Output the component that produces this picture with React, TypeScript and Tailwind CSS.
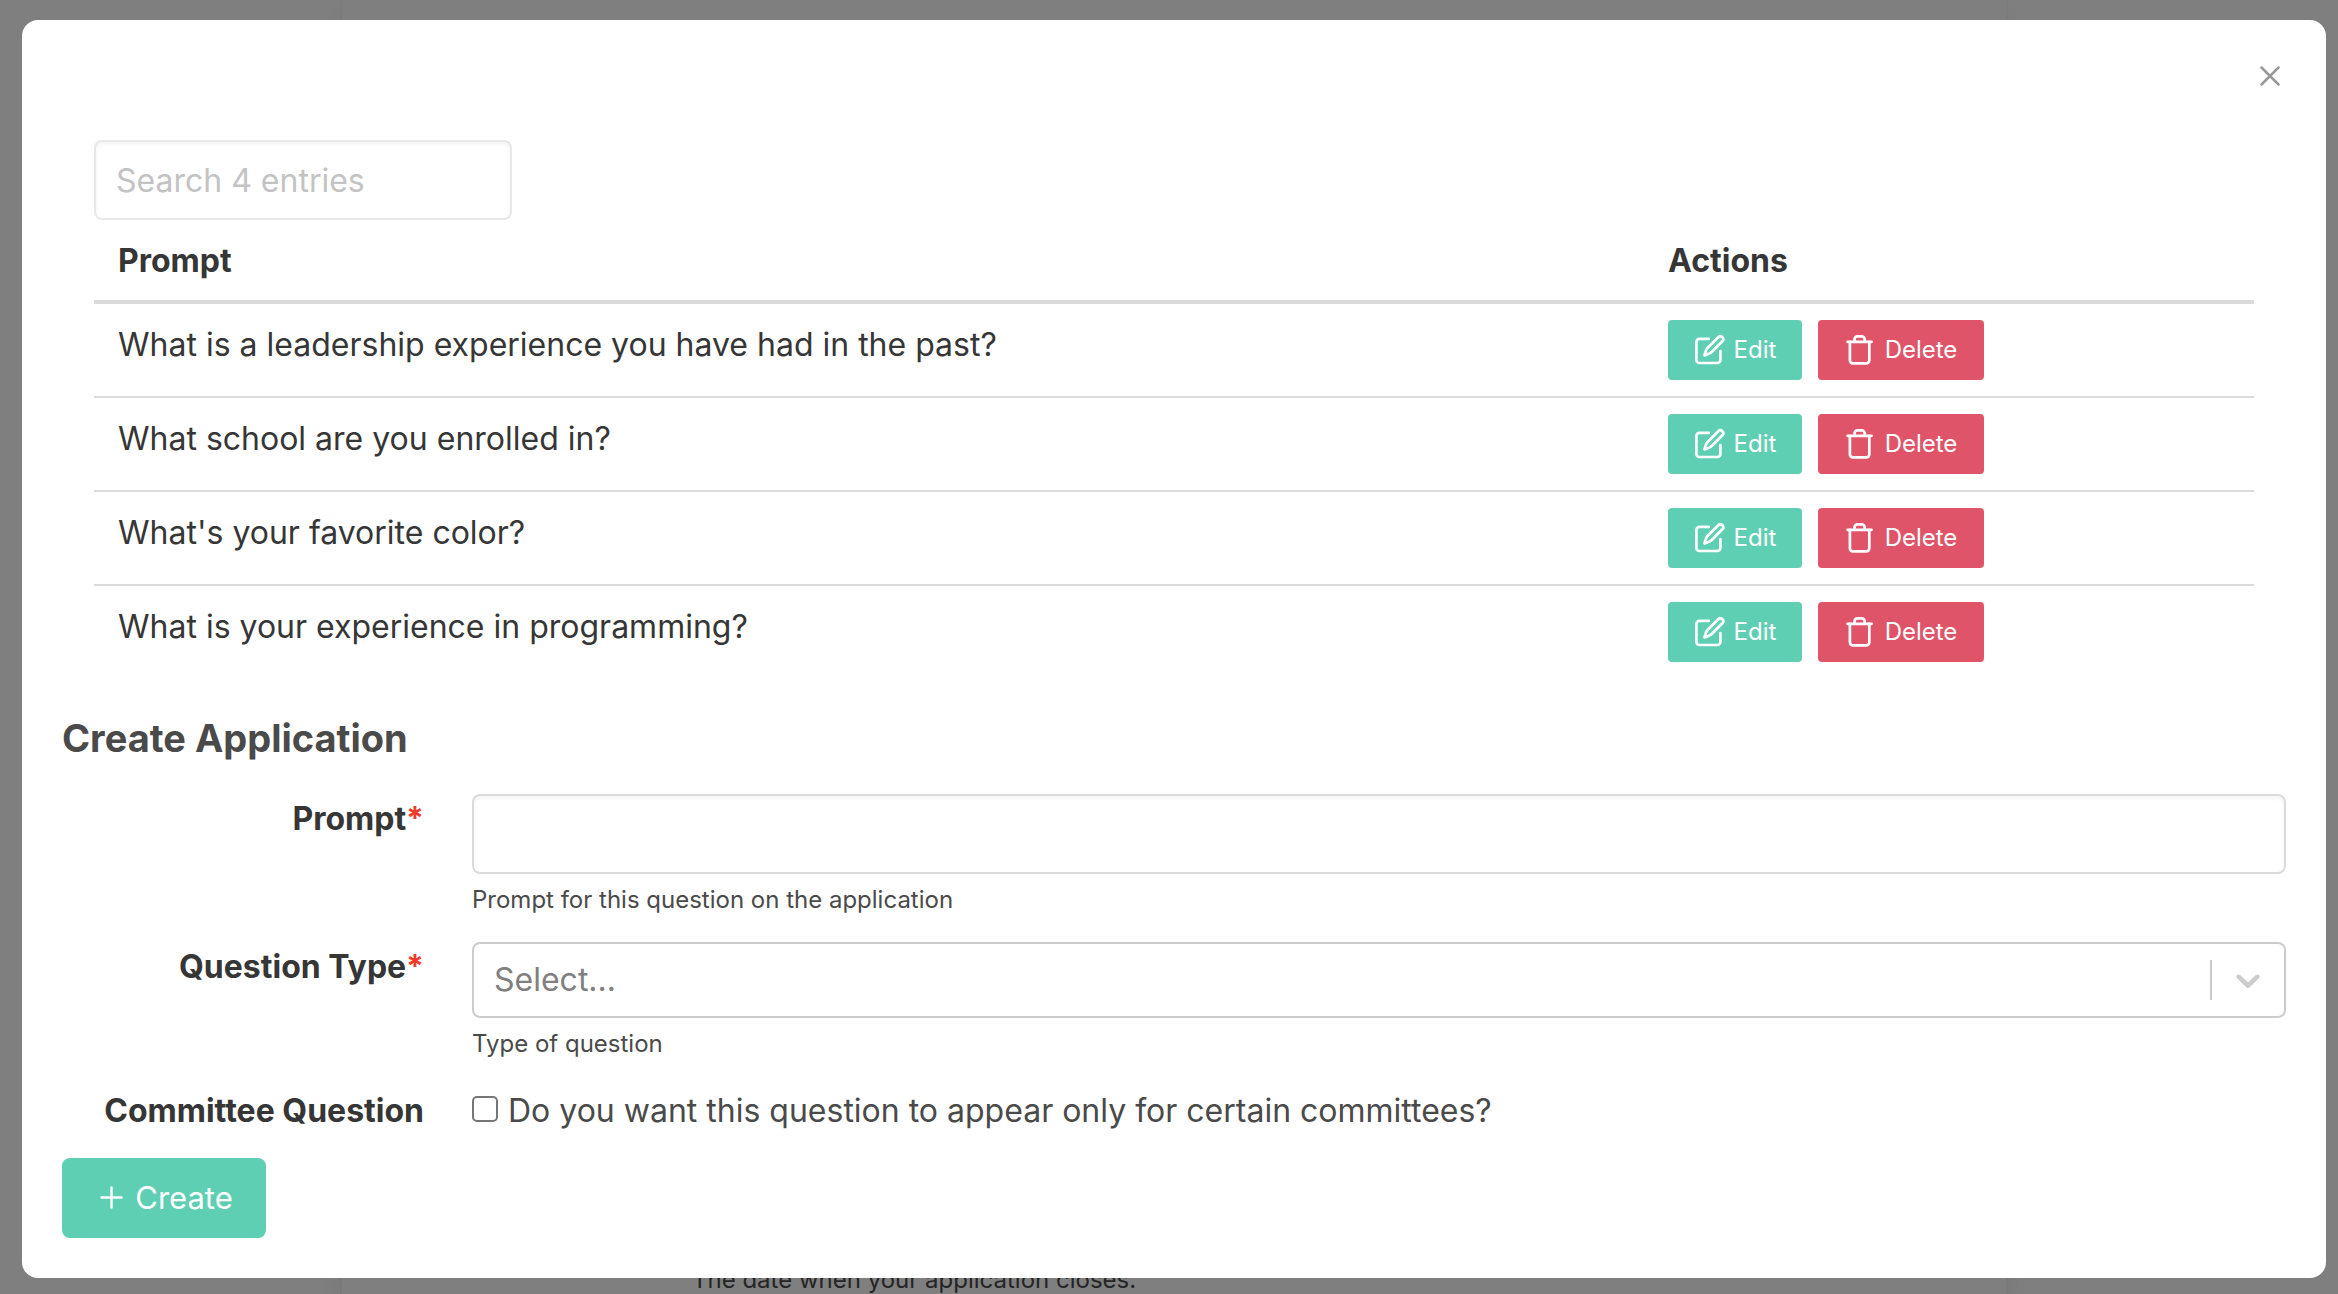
import React from "react";

const questions = [
  "What is a leadership experience you have had in the past?",
  "What school are you enrolled in?",
  "What's your favorite color?",
  "What is your experience in programming?",
];

function EditIcon() {
  return (
    <svg width="32" height="32" viewBox="0 0 32 32" fill="none" stroke="currentColor" strokeWidth="2.7" strokeLinecap="round" strokeLinejoin="round" aria-hidden="true">
      <path d="M14.800 4.900H5.400a3 3 0 0 0-3 3V26a3 3 0 0 0 3 3h18a3 3 0 0 0 3-3v-9" />
      <path d="M24.300 3.200a2.900 2.900 0 0 1 4.100 4.100L18 17.800Q16 19.800 10.500 21.400Q11.800 15.800 13.800 13.800z" />
    </svg>
  );
}

function TrashIcon() {
  return (
    <svg width="32" height="32" viewBox="0 0 32 32" fill="none" stroke="currentColor" strokeWidth="2.7" strokeLinecap="round" strokeLinejoin="round" aria-hidden="true">
      <path d="M2.600 7.800h24" />
      <path d="M24.300 7.800v18.500a3 3 0 0 1-3 3H7.900a3 3 0 0 1-3-3V7.800" />
      <path d="M9.500 7.800V5.300a3 3 0 0 1 3-3h4.200a3 3 0 0 1 3 3v2.500" />
    </svg>
  );
}

function PlusIcon() {
  return (
    <svg width="32" height="32" viewBox="0 0 32 32" fill="none" stroke="currentColor" strokeWidth="2.400" strokeLinecap="round" aria-hidden="true">
      <path d="M16.500 5.500v20M6.500 15.500h20" />
    </svg>
  );
}

function Field({ id, label, required, children }: { id: string; label: string; required?: boolean; children: React.ReactNode }) {
  return (
    <div className="mb-6 flex gap-12">
      <label htmlFor={id} className="w-[362px] shrink-0 text-right leading-[50px] font-bold text-[#363636]">
        {label}
        {required && <span className="text-[#f03a2b]">*</span>}
      </label>
      <div className="min-w-0 flex-1">{children}</div>
    </div>
  );
}

export default function App() {
  return (
    <div className="relative min-h-screen overflow-hidden bg-white font-['Inter',sans-serif] text-[32px] leading-[48px] text-[#4a4a4a]">
      <div className="flex h-screen items-end bg-white pr-[332px] pl-[342px]">
        <div className="h-full flex-1 bg-white shadow-[0_16px_32px_-4px_rgba(10,10,10,0.1),0_0_0_2px_rgba(10,10,10,0.02)]">
          <div className="flex h-full items-end pl-[350px]">
            <p className="-mb-1 text-2xl leading-9">The date when your application closes.</p>
          </div>
        </div>
      </div>
      <div className="absolute inset-0 bg-black/50 pt-5 pr-3 pl-[22px]">
        <div role="dialog" aria-modal="true" aria-label="Application questions" className="relative rounded-2xl bg-white p-10">
          <button type="button" aria-label="Close" className="absolute top-10 right-10 flex size-8 items-center justify-center text-[#999]">
            <svg width="20" height="20" viewBox="0 0 20 20" fill="none" stroke="currentColor" strokeWidth="2.5" strokeLinecap="round" aria-hidden="true">
              <path d="M1.500 1.500l17 17M18.500 1.500l-17 17" />
            </svg>
          </button>
          <div className="px-8 pt-20">
            <input
              type="text"
              aria-label="Search entries"
              placeholder="Search 4 entries"
              className="block h-20 w-[418px] rounded-lg border-2 border-[#e8e8e8] px-5 shadow-[inset_0_2px_4px_rgba(10,10,10,0.05)] placeholder:text-[#c3c3c3]"
            />
            <table className="w-full border-separate border-spacing-0 text-left leading-[50px] text-[#363636]">
              <thead>
                <tr>
                  <th scope="col" className="border-b-4 border-[#dbdbdb] px-6 pt-4 pb-[14px] font-bold">Prompt</th>
                  <th scope="col" className="w-[610px] border-b-4 border-[#dbdbdb] px-6 pt-4 pb-[14px] font-bold">Actions</th>
                </tr>
              </thead>
              <tbody>
                {questions.map((q) => (
                  <tr key={q} className="group align-top">
                    <td className="border-b-2 border-[#dbdbdb] px-6 py-4 group-last:border-b-0">{q}</td>
                    <td className="border-b-2 border-[#dbdbdb] px-6 py-4 group-last:border-b-0">
                      <div className="flex gap-4 text-2xl text-white">
                        <button type="button" className="flex h-[60px] w-[134px] items-center justify-center gap-2 rounded bg-[#5fcfb4]">
                          <EditIcon />
                          Edit
                        </button>
                        <button type="button" className="flex h-[60px] w-[166px] items-center justify-center gap-2 rounded bg-[#df5468]">
                          <TrashIcon />
                          Delete
                        </button>
                      </div>
                    </td>
                  </tr>
                ))}
              </tbody>
            </table>
          </div>
          <h3 className="mt-9 mb-8 text-[38px] leading-12 font-bold">Create Application</h3>
          <form>
            <Field id="prompt" label="Prompt" required>
              <input id="prompt" type="text" className="block h-20 w-full rounded-lg border-2 border-[#dbdbdb] px-5 shadow-[inset_0_2px_4px_rgba(10,10,10,0.05)]" />
              <p className="mt-2 text-2xl leading-9">Prompt for this question on the application</p>
            </Field>
            <Field id="type" label="Question Type" required>
              <div className="relative">
                <select id="type" defaultValue="" className="block h-[76px] w-full appearance-none rounded-lg border-2 border-[#ccc] bg-white px-5 text-[#808080]">
                  <option value="">Select...</option>
                </select>
                <div className="pointer-events-none absolute inset-y-0 right-0 flex items-center text-[#ccc]">
                  <span className="mr-4 h-10 w-[2px] bg-[#ccc]" />
                  <svg className="mr-[18px]" width="40" height="40" viewBox="0 0 20 20" fill="currentColor" aria-hidden="true">
                    <path d="M4.516 7.548c0.436-0.446 1.043-0.481 1.576 0l3.908 3.747 3.908-3.747c0.533-0.481 1.141-0.446 1.574 0 0.436 0.445 0.408 1.197 0 1.615-0.406 0.418-4.695 4.502-4.695 4.502-0.217 0.223-0.502 0.335-0.787 0.335s-0.57-0.112-0.789-0.335c0 0-4.287-4.084-4.695-4.502s-0.436-1.17 0-1.615z" />
                  </svg>
                </div>
              </div>
              <p className="mt-2 text-2xl leading-9">Type of question</p>
            </Field>
            <Field id="committee" label="Committee Question">
              <div className="flex items-center gap-[10px] leading-[50px]">
                <input id="committee" type="checkbox" className="-mt-1 size-[26px] appearance-none rounded-[5px] border-2 border-[#767676] bg-white checked:bg-[#767676]" />
                <label htmlFor="committee">Do you want this question to appear only for certain committees?</label>
              </div>
            </Field>
            <button type="button" className="-mt-[2px] flex h-20 w-[204px] items-center justify-center gap-2 rounded-lg bg-[#5fcfb4] text-[31px] text-white">
              <PlusIcon />
              Create
            </button>
          </form>
        </div>
      </div>
    </div>
  );
}
